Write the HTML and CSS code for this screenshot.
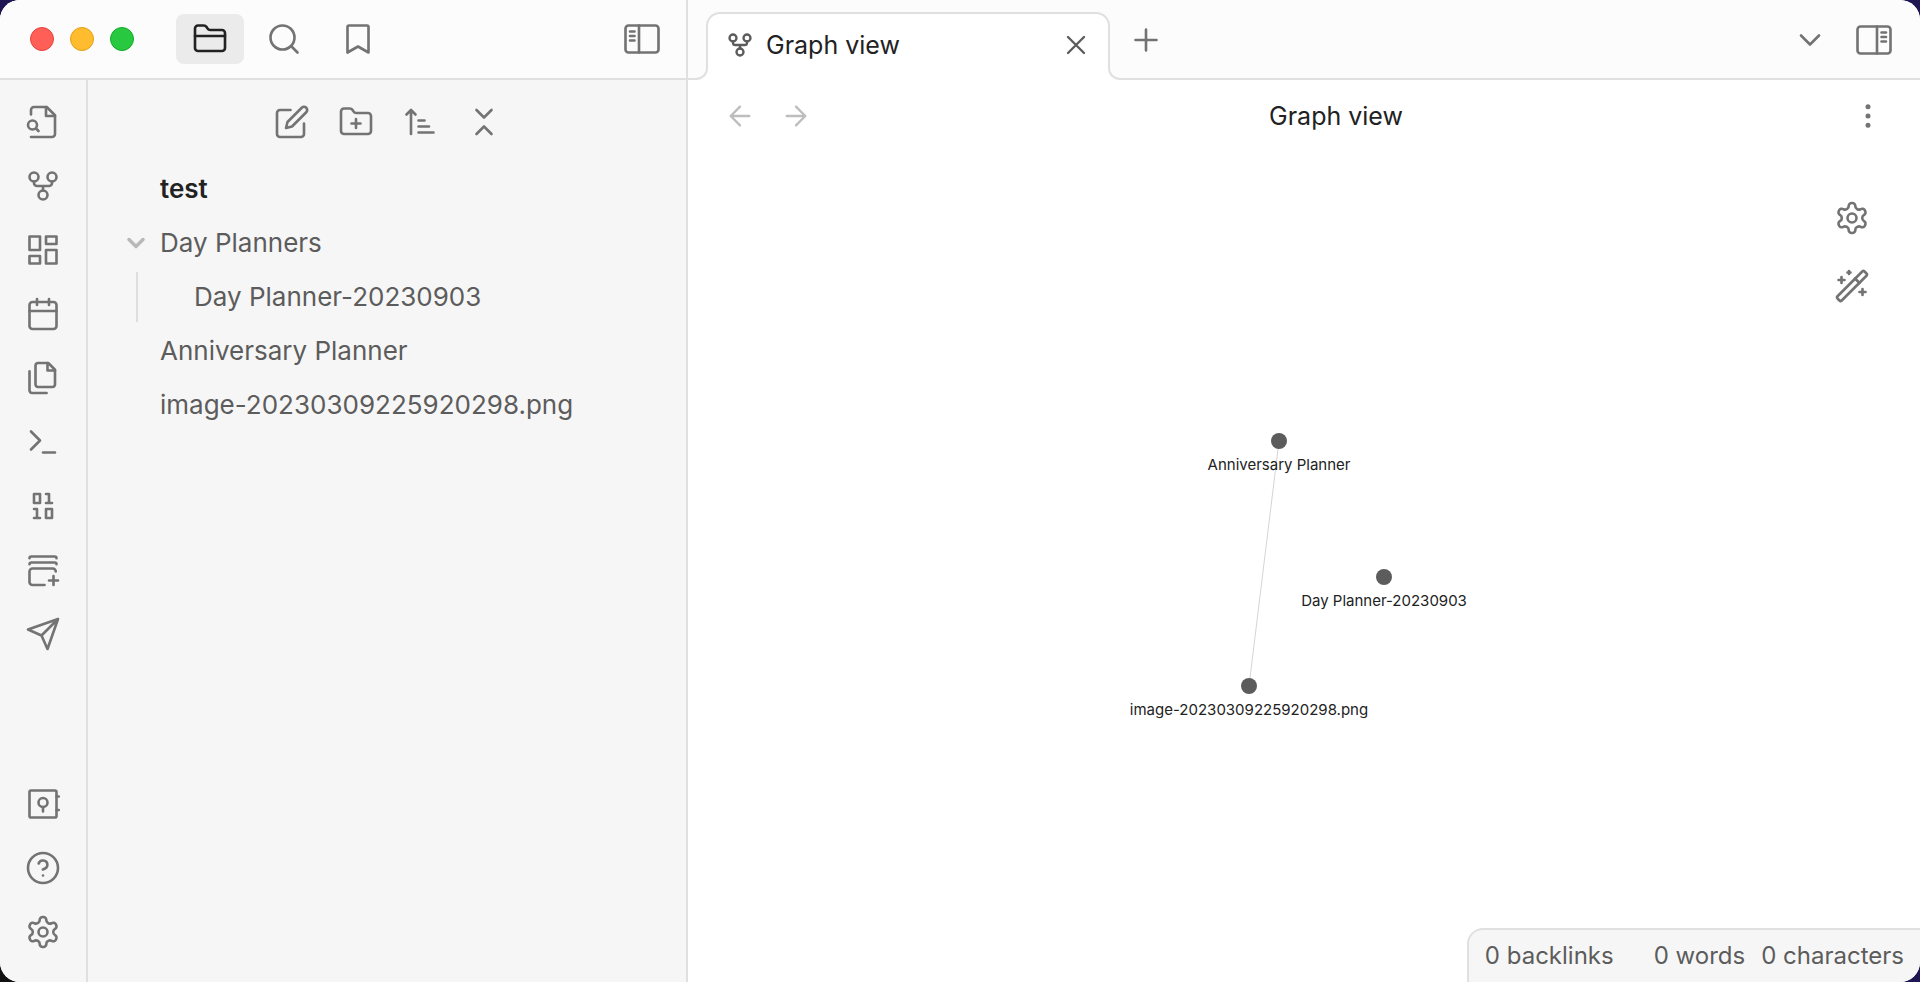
FILE: index.html
```html
<!DOCTYPE html>
<html lang="en">

<head>
    <meta charset="UTF-8">
    <meta name="viewport" content="width=device-width, initial-scale=1.0">
    <title>Graph view - test</title>
    <link rel="stylesheet" href="styles.css">
</head>

<body>
    <!-- icon sprite -->
    <svg class="sprite" aria-hidden="true">
        <symbol id="i-folder" viewBox="0 0 24 24">
            <path d="M4 20h16a2 2 0 0 0 2-2V8a2 2 0 0 0-2-2h-7.93a2 2 0 0 1-1.66-.9l-.82-1.2A2 2 0 0 0 7.93 3H4a2 2 0 0 0-2 2v13c0 1.1.9 2 2 2Z" />
            <path d="M2 10h20" />
        </symbol>
        <symbol id="i-search" viewBox="0 0 24 24">
            <circle cx="11" cy="11" r="8" />
            <path d="m21 21-4.3-4.3" />
        </symbol>
        <symbol id="i-bookmark" viewBox="0 0 24 24">
            <path d="m19 21-7-4-7 4V4a1 1 0 0 1 1-1h12a1 1 0 0 1 1 1v17z" />
        </symbol>
        <symbol id="i-sidebar-left" viewBox="0 0 24 24">
            <rect x="1" y="3" width="22" height="18" rx="2" />
            <path d="M10 3v18M4 7h3M4 10h3M4 13h3" />
        </symbol>
        <symbol id="i-sidebar-right" viewBox="0 0 24 24">
            <rect x="1" y="3" width="22" height="18" rx="2" />
            <path d="M14 3v18M17 7h3M17 10h3M17 13h3" />
        </symbol>
        <symbol id="i-file-search" viewBox="0 0 24 24">
            <path d="M4 22h14a2 2 0 0 0 2-2V7.5L14.5 2H6a2 2 0 0 0-2 2v3" />
            <path d="M14 2v6h6" />
            <circle cx="5" cy="14" r="3" />
            <path d="m9 18-1.5-1.5" />
        </symbol>
        <symbol id="i-graph" viewBox="0 0 24 24">
            <circle cx="12" cy="18" r="3" />
            <circle cx="6" cy="6" r="3" />
            <circle cx="18" cy="6" r="3" />
            <path d="M18 9v1a2 2 0 0 1-2 2H8a2 2 0 0 1-2-2V9M12 12v3" />
        </symbol>
        <symbol id="i-dashboard" viewBox="0 0 24 24">
            <rect x="3" y="3" width="7" height="9" />
            <rect x="14" y="3" width="7" height="5" />
            <rect x="14" y="12" width="7" height="9" />
            <rect x="3" y="16" width="7" height="5" />
        </symbol>
        <symbol id="i-calendar" viewBox="0 0 24 24">
            <rect x="3" y="4" width="18" height="18" rx="2" />
            <path d="M16 2v4M8 2v4M3 10h18" />
        </symbol>
        <symbol id="i-files" viewBox="0 0 24 24">
            <path d="M15.5 2H8.6c-.4 0-.8.2-1.1.5-.3.3-.5.7-.5 1.1v12.8c0 .4.2.8.5 1.1.3.3.7.5 1.1.5h9.8c.4 0 .8-.2 1.1-.5.3-.3.5-.7.5-1.1V6.5L15.5 2z" />
            <path d="M3 7.6v12.8c0 .4.2.8.5 1.1.3.3.7.5 1.1.5h9.8M15 2v5h5" />
        </symbol>
        <symbol id="i-terminal" viewBox="0 0 24 24">
            <path d="m4 17 6-6-6-6M12 19h8" />
        </symbol>
        <symbol id="i-binary" viewBox="0 0 24 24">
            <rect x="6" y="4" width="4" height="6" />
            <rect x="14" y="14" width="4" height="6" />
            <path d="M6 20h4M14 10h4M6 14h2v6M14 4h2v6" />
        </symbol>
        <symbol id="i-stack-plus" viewBox="0 0 24 24">
            <path d="M3 4.2c0-.8.5-1.2 1.2-1.2h15.6c.7 0 1.2.4 1.2 1.2M3 8.2C3 7.4 3.5 7 4.2 7h15.6c.7 0 1.2.4 1.2 1.2" />
            <path d="M20.5 13a2 2 0 0 0-2-2H5a2 2 0 0 0-2 2v7a2 2 0 0 0 2 2h8M19 16v6M16 19h6" />
        </symbol>
        <symbol id="i-send" viewBox="0 0 24 24">
            <path d="m22 2-7 20-4-9-9-4ZM22 2 11 13" />
        </symbol>
        <symbol id="i-vault" viewBox="0 0 24 24">
            <rect x="3" y="3" width="18" height="18" rx="1" />
            <circle cx="12" cy="11" r="3" />
            <path d="M12 14v3M21 7h1.5M21 16h1.5" />
        </symbol>
        <symbol id="i-help" viewBox="0 0 24 24">
            <circle cx="12" cy="12" r="10" />
            <path d="M9.09 9a3 3 0 0 1 5.83 1c0 2-3 3-3 3M12 17h.01" />
        </symbol>
        <symbol id="i-settings" viewBox="0 0 24 24">
            <path d="M12.22 2h-.44a2 2 0 0 0-2 2v.18a2 2 0 0 1-1 1.73l-.43.25a2 2 0 0 1-2 0l-.15-.08a2 2 0 0 0-2.73.73l-.22.38a2 2 0 0 0 .73 2.73l.15.1a2 2 0 0 1 1 1.72v.51a2 2 0 0 1-1 1.74l-.15.09a2 2 0 0 0-.73 2.73l.22.38a2 2 0 0 0 2.73.73l.15-.08a2 2 0 0 1 2 0l.43.25a2 2 0 0 1 1 1.73V20a2 2 0 0 0 2 2h.44a2 2 0 0 0 2-2v-.18a2 2 0 0 1 1-1.73l.43-.25a2 2 0 0 1 2 0l.15.08a2 2 0 0 0 2.73-.73l.22-.39a2 2 0 0 0-.73-2.73l-.15-.08a2 2 0 0 1-1-1.74v-.5a2 2 0 0 1 1-1.74l.15-.09a2 2 0 0 0 .73-2.73l-.22-.38a2 2 0 0 0-2.73-.73l-.15.08a2 2 0 0 1-2 0l-.43-.25a2 2 0 0 1-1-1.73V4a2 2 0 0 0-2-2z" />
            <circle cx="12" cy="12" r="3" />
        </symbol>
        <symbol id="i-edit" viewBox="0 0 24 24">
            <path d="M11 4H4a2 2 0 0 0-2 2v14a2 2 0 0 0 2 2h14a2 2 0 0 0 2-2v-7" />
            <path d="M18.5 2.5a2.121 2.121 0 0 1 3 3L12 15l-4 1 1-4 9.5-9.5z" />
        </symbol>
        <symbol id="i-folder-plus" viewBox="0 0 24 24">
            <path d="M4 20h16a2 2 0 0 0 2-2V8a2 2 0 0 0-2-2h-7.93a2 2 0 0 1-1.66-.9l-.82-1.2A2 2 0 0 0 7.93 3H4a2 2 0 0 0-2 2v13c0 1.1.9 2 2 2Z" />
            <path d="M12 10v6M9 13h6" />
        </symbol>
        <symbol id="i-sort" viewBox="0 0 24 24">
            <path d="M11 11h4M11 15h7M11 19h10M9 7 6 4 3 7M6 6v14" />
        </symbol>
        <symbol id="i-collapse" viewBox="0 0 24 24">
            <path d="m7 20 5-5 5 5M7 4l5 5 5-5" />
        </symbol>
        <symbol id="i-chevron" viewBox="0 0 24 24">
            <path d="m6 9 6 6 6-6" />
        </symbol>
        <symbol id="i-close" viewBox="0 0 24 24">
            <path d="M18 6 6 18M6 6l12 12" />
        </symbol>
        <symbol id="i-plus" viewBox="0 0 24 24">
            <path d="M5 12h14M12 5v14" />
        </symbol>
        <symbol id="i-back" viewBox="0 0 24 24">
            <path d="m12 19-7-7 7-7M19 12H5" />
        </symbol>
        <symbol id="i-forward" viewBox="0 0 24 24">
            <path d="m12 5 7 7-7 7M5 12h14" />
        </symbol>
        <symbol id="i-more" viewBox="0 0 24 24">
            <circle cx="12" cy="5" r="1" />
            <circle cx="12" cy="12" r="1" />
            <circle cx="12" cy="19" r="1" />
        </symbol>
        <symbol id="i-wand" viewBox="0 0 24 24">
            <path d="m21.64 3.64-1.28-1.28a1.08 1.08 0 0 0-1.52 0L2.36 18.84a1.08 1.08 0 0 0 0 1.52l1.28 1.28a1.1 1.1 0 0 0 1.52 0L21.64 5.16a1.1 1.1 0 0 0 0-1.52Z" />
            <path d="m14 7 3 3M5 6v4M19 14v4M10 2v2M7 8H3M21 16h-4M11 3H9" />
        </symbol>
    </svg>

    <div class="window">
        <div class="left">
            <header class="left-header">
                <div class="lights">
                    <span class="light red"></span>
                    <span class="light yellow"></span>
                    <span class="light green"></span>
                </div>
                <div class="side-tabs">
                    <button class="side-tab active" aria-label="Files"><svg class="icon"><use href="#i-folder" /></svg></button>
                    <button class="side-tab" aria-label="Search"><svg class="icon"><use href="#i-search" /></svg></button>
                    <button class="side-tab" aria-label="Bookmarks"><svg class="icon"><use href="#i-bookmark" /></svg></button>
                </div>
                <button class="btn push" aria-label="Collapse sidebar"><svg class="icon"><use href="#i-sidebar-left" /></svg></button>
            </header>

            <div class="left-body">
                <nav class="ribbon">
                    <button class="btn" aria-label="Open quick switcher"><svg class="icon"><use href="#i-file-search" /></svg></button>
                    <button class="btn" aria-label="Open graph view"><svg class="icon"><use href="#i-graph" /></svg></button>
                    <button class="btn" aria-label="Create new canvas"><svg class="icon"><use href="#i-dashboard" /></svg></button>
                    <button class="btn" aria-label="Open daily note"><svg class="icon"><use href="#i-calendar" /></svg></button>
                    <button class="btn" aria-label="Insert template"><svg class="icon"><use href="#i-files" /></svg></button>
                    <button class="btn" aria-label="Open command palette"><svg class="icon"><use href="#i-terminal" /></svg></button>
                    <button class="btn" aria-label="Format converter"><svg class="icon"><use href="#i-binary" /></svg></button>
                    <button class="btn" aria-label="Add to stack"><svg class="icon"><use href="#i-stack-plus" /></svg></button>
                    <button class="btn" aria-label="Publish"><svg class="icon"><use href="#i-send" /></svg></button>
                    <div class="ribbon-bottom">
                        <button class="btn" aria-label="Open another vault"><svg class="icon"><use href="#i-vault" /></svg></button>
                        <button class="btn" aria-label="Help"><svg class="icon"><use href="#i-help" /></svg></button>
                        <button class="btn" aria-label="Settings"><svg class="icon"><use href="#i-settings" /></svg></button>
                    </div>
                </nav>

                <aside class="explorer">
                    <div class="toolbar">
                        <button class="btn" aria-label="New note"><svg class="icon"><use href="#i-edit" /></svg></button>
                        <button class="btn" aria-label="New folder"><svg class="icon"><use href="#i-folder-plus" /></svg></button>
                        <button class="btn" aria-label="Change sort order"><svg class="icon"><use href="#i-sort" /></svg></button>
                        <button class="btn" aria-label="Collapse all"><svg class="icon"><use href="#i-collapse" /></svg></button>
                    </div>
                    <div class="vault-name">test</div>
                    <ul class="tree">
                        <li>
                            <a class="item folder" href="#"><svg class="icon arrow"><use href="#i-chevron" /></svg>Day Planners</a>
                            <ul class="children">
                                <li><a class="item" href="#">Day Planner-20230903</a></li>
                            </ul>
                        </li>
                        <li><a class="item" href="#">Anniversary Planner</a></li>
                        <li><a class="item" href="#">image-20230309225920298.png</a></li>
                    </ul>
                </aside>
            </div>
        </div>

        <main class="main">
            <header class="tab-bar">
                <div class="tab">
                    <svg class="icon small"><use href="#i-graph" /></svg>
                    <span class="tab-title">Graph view</span>
                    <button class="tab-close" aria-label="Close"><svg class="icon medium"><use href="#i-close" /></svg></button>
                </div>
                <button class="new-tab" aria-label="New tab"><svg class="icon"><use href="#i-plus" /></svg></button>
                <div class="tab-actions">
                    <button class="btn" aria-label="Tab list"><svg class="icon"><use href="#i-chevron" /></svg></button>
                    <button class="btn" aria-label="Expand sidebar"><svg class="icon"><use href="#i-sidebar-right" /></svg></button>
                </div>
            </header>

            <div class="view-header">
                <div class="history">
                    <button class="btn" aria-label="Back" disabled><svg class="icon medium"><use href="#i-back" /></svg></button>
                    <button class="btn" aria-label="Forward" disabled><svg class="icon medium"><use href="#i-forward" /></svg></button>
                </div>
                <h1 class="view-title">Graph view</h1>
                <button class="btn" aria-label="More options"><svg class="icon medium dots"><use href="#i-more" /></svg></button>
            </div>

            <div class="graph">
                <svg class="graph-canvas" viewBox="0 0 1232 830">
                    <line class="edge" x1="591" y1="289" x2="561" y2="534" />
                    <circle class="node" cx="591" cy="289" r="8" />
                    <circle class="node" cx="696" cy="425" r="8" />
                    <circle class="node" cx="561" cy="534" r="8" />
                    <text class="node-label" x="591" y="318">Anniversary Planner</text>
                    <text class="node-label" x="696" y="454">Day Planner-20230903</text>
                    <text class="node-label" x="561" y="563">image-20230309225920298.png</text>
                </svg>
                <div class="graph-controls">
                    <button class="btn" aria-label="Open graph settings"><svg class="icon"><use href="#i-settings" /></svg></button>
                    <button class="btn" aria-label="Start timelapse animation"><svg class="icon"><use href="#i-wand" /></svg></button>
                </div>
            </div>

            <footer class="status-bar">
                <span class="backlinks">0 backlinks</span>
                <span>0 words</span>
                <span>0 characters</span>
            </footer>
        </main>
    </div>
</body>

</html>
```

FILE: styles.css
```css
*,
*::before,
*::after {
    box-sizing: border-box;
}

body,
html {
    margin: 0;
    height: 100%;
}

body {
    font-family: Inter, 'Liberation Sans', sans-serif;
    font-size: 26px;
    color: #5c5c5c;
    background: linear-gradient(to top right, #111, #1e1553 50%);
}

ul {
    list-style: none;
    margin: 0;
    padding: 0;
}

button {
    display: flex;
    align-items: center;
    justify-content: center;
    padding: 0;
    border: 0;
    background: none;
    color: #737373;
    cursor: pointer;
}

.sprite {
    display: none;
}

.icon {
    width: 36px;
    height: 36px;
    flex: none;
    fill: none;
    stroke: currentColor;
    stroke-width: 1.75;
    stroke-linecap: round;
    stroke-linejoin: round;
}

.icon.medium {
    width: 32px;
    height: 32px;
}

.icon.small {
    width: 28px;
    height: 28px;
    stroke-width: 2;
}

.btn {
    width: 56px;
    height: 56px;
    flex: none;
}

.btn:disabled {
    color: #bdbdbd;
    cursor: default;
}

.window {
    display: flex;
    height: 100%;
    overflow: hidden;
    border-radius: 20px;
    background-color: #fff;
}

/* left side */
.left {
    display: flex;
    flex-direction: column;
    width: 688px;
    flex: none;
    border-right: 2px solid #e0e0e0;
    background-color: #f6f6f6;
}

.left-header {
    display: flex;
    align-items: center;
    height: 80px;
    flex: none;
    padding: 0 16px 0 30px;
    border-bottom: 2px solid #e0e0e0;
    background-color: #fcfcfc;
}

.lights {
    display: flex;
    gap: 16px;
    margin-right: 42px;
}

.light {
    width: 24px;
    height: 24px;
    border-radius: 50%;
    border: 1px solid;
}

.red {
    background-color: #ff5f57;
    border-color: #e2463f;
}

.yellow {
    background-color: #febc2e;
    border-color: #e1a116;
}

.green {
    background-color: #28c840;
    border-color: #12ac28;
}

.side-tabs {
    display: flex;
    gap: 6px;
}

.side-tab {
    width: 68px;
    height: 50px;
    border-radius: 8px;
}

.side-tab.active {
    background-color: #ebebeb;
    color: #222;
}

.push {
    margin-left: auto;
}

.left-body {
    display: flex;
    flex: 1;
    min-height: 0;
}

.ribbon {
    display: flex;
    flex-direction: column;
    align-items: center;
    gap: 8px;
    width: 88px;
    padding: 14px 0 22px;
    border-right: 2px solid #e0e0e0;
}

.ribbon-bottom {
    display: flex;
    flex-direction: column;
    gap: 8px;
    margin-top: auto;
}

.explorer {
    flex: 1;
    min-width: 0;
}

.toolbar {
    display: flex;
    justify-content: center;
    gap: 8px;
    padding: 14px 0 14px 2px;
}

.vault-name {
    padding-left: 72px;
    line-height: 50px;
    margin-bottom: 4px;
    font-weight: 600;
    color: #222;
}

.tree li {
    margin-bottom: 4px;
}

.item {
    display: block;
    padding-left: 72px;
    line-height: 50px;
    color: #5c5c5c;
    text-decoration: none;
    white-space: nowrap;
}

.folder {
    display: flex;
    align-items: center;
    gap: 10px;
    padding-left: 34px;
    margin-bottom: 4px;
}

.arrow {
    width: 28px;
    height: 28px;
    color: #b8b8b8;
    stroke-width: 3;
}

.children {
    margin-left: 48px;
    border-left: 2px solid #dedede;
}

.children .item {
    padding-left: 56px;
}

.tree .children li {
    margin-bottom: 0;
}

/* right side */
.main {
    position: relative;
    display: flex;
    flex-direction: column;
    flex: 1;
    min-width: 0;
}

.tab-bar {
    display: flex;
    align-items: center;
    height: 80px;
    flex: none;
    padding: 2px 18px 0;
    border-bottom: 2px solid #e0e0e0;
    background-color: #fcfcfc;
}

.tab {
    position: relative;
    display: flex;
    align-items: center;
    gap: 12px;
    width: 404px;
    height: 68px;
    align-self: flex-end;
    margin-bottom: -2px;
    padding: 0 16px 4px 18px;
    border: 2px solid #e0e0e0;
    border-bottom: 0;
    border-radius: 14px 14px 0 0;
    background-color: #fff;
}

/* rounded feet of the tab */
.tab::before,
.tab::after {
    content: '';
    position: absolute;
    bottom: 0;
    width: 12px;
    height: 12px;
    border-bottom: 2px solid #e0e0e0;
    background-color: #fcfcfc;
    box-shadow: 0 0 0 6px #fff;
    clip-path: inset(0);
}

.tab::before {
    left: -12px;
    border-right: 2px solid #e0e0e0;
    border-bottom-right-radius: 12px;
}

.tab::after {
    right: -12px;
    border-left: 2px solid #e0e0e0;
    border-bottom-left-radius: 12px;
}

.tab-title {
    flex: 1;
    font-size: 25px;
    color: #222;
}

.tab-close {
    color: #5c5c5c;
}

.new-tab {
    margin-left: 18px;
}

.tab-actions {
    display: flex;
    gap: 8px;
    margin-left: auto;
}

.view-header {
    display: flex;
    align-items: center;
    height: 72px;
    flex: none;
    padding: 0 24px;
}

.history {
    display: flex;
    margin-right: 8px;
}

.view-title {
    flex: 1;
    margin: 0;
    font-size: 25px;
    font-weight: 400;
    text-align: center;
    color: #222;
}

.dots {
    fill: currentColor;
}

.graph {
    position: relative;
    flex: 1;
    min-height: 0;
}

.graph-canvas {
    display: block;
    width: 100%;
    height: 100%;
}

.edge {
    stroke: #d4d4d4;
}

.node {
    fill: #5c5c5c;
}

.node-label {
    font-size: 15px;
    fill: #222;
    text-anchor: middle;
}

.graph-controls {
    position: absolute;
    top: 38px;
    right: 40px;
    display: flex;
    flex-direction: column;
    gap: 12px;
}

.status-bar {
    position: absolute;
    right: 0;
    bottom: 0;
    display: flex;
    gap: 16px;
    padding: 0 16px;
    border: 2px solid #e0e0e0;
    border-width: 2px 0 0 2px;
    border-radius: 16px 0 0 0;
    background-color: #f6f6f6;
    font-size: 24px;
    line-height: 52px;
}

.backlinks {
    margin-right: 24px;
}
```
